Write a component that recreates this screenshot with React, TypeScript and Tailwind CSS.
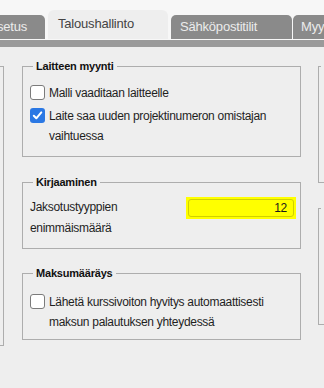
import React from "react"

function Box({ checked }: { checked?: boolean }) {
  if (checked) {
    return (
      <span className="mt-[2px] flex h-[15px] w-[15px] shrink-0 items-center justify-center rounded-[3px] bg-[#2b78e4]">
        <svg width="11" height="11" viewBox="0 0 11 11">
          <path d="M1.8 5.8 L4.3 8.3 L9.3 2.4" fill="none" stroke="#ffffff" strokeWidth="2" strokeLinecap="round" strokeLinejoin="round" />
        </svg>
      </span>
    )
  }
  return <span className="mt-[2px] h-[15px] w-[15px] shrink-0 rounded-[3px] border border-[#7b7b7b] bg-white" />
}

function Legend({ children }: { children: React.ReactNode }) {
  return (
    <legend className="ml-[3px] px-[3px] text-[11px] leading-[14px] font-bold tracking-[-0.2px] text-[#111]">
      {children}
    </legend>
  )
}

export default function App() {
  return (
    <div className="w-[324px] h-[388px] overflow-hidden bg-[#eeeeee] font-['Liberation_Sans',Arial,sans-serif] text-[#1f1f1f]">
      {/* Tabs */}
      <div className="bg-[#f7f7f7] pt-[10px] pb-px">
        <div className="flex items-end whitespace-nowrap text-[13px] tracking-[-0.2px]">
          <div className="-ml-[75px] flex h-[24px] w-[120px] shrink-0 items-center justify-end rounded-t-[5px] bg-[#8a8a8a] pr-[18px] text-[#ececec]">
            Perusasetus
          </div>
          <div className="ml-[3px] h-[29px] w-[120px] shrink-0 rounded-t-[6px] bg-[#eeeeee] pl-[10px] pt-[4px] text-[#444]">
            Taloushallinto
          </div>
          <div className="ml-[3px] flex h-[24px] w-[121px] shrink-0 items-center rounded-t-[5px] bg-[#8a8a8a] pl-[9px] text-[#ececec]">
            Sähköpostitilit
          </div>
          <div className="ml-[1px] flex h-[24px] w-[31px] shrink-0 items-center overflow-hidden rounded-tl-[5px] bg-[#8a8a8a] pl-[8px] text-[#ececec]">
            Myy
          </div>
        </div>
      </div>
      <div className="h-[7px] bg-[#9a9a9a]" />

      {/* Content */}
      <div className="flex items-start">
        <div className="-ml-[96px] mt-[19px] h-[280px] w-[100px] shrink-0 border border-[#adadad]" />

        <div className="ml-[18px] w-[279px] shrink-0 pt-[12px] text-[12px] tracking-[-0.3px]">
          <fieldset className="border border-[#adadad] pl-[7px] pr-[4px] pb-[10px]">
            <Legend>Laitteen myynti</Legend>
            <div className="mt-[10px] flex items-start gap-[4px] leading-[20px]">
              <Box />
              <span>Malli vaaditaan laitteelle</span>
            </div>
            <div className="mt-[3px] flex items-start gap-[4px] leading-[20px]">
              <Box checked />
              <span className="w-[230px]">Laite saa uuden projektinumeron omistajan vaihtuessa</span>
            </div>
          </fieldset>

          <fieldset className="mt-[18px] border border-[#adadad] pl-[7px] pr-[4px] pb-[9px]">
            <Legend>Kirjaaminen</Legend>
            <div className="mt-[8px] flex items-start justify-between">
              <span className="w-[140px] leading-[21px]">Jaksotustyyppien enimmäismäärä</span>
              <div className="h-[22px] w-[110px] bg-[#ffff00] p-[2px]">
                <div className="flex h-full items-center justify-end rounded-[3px] border border-[#d0d000] pr-[6px] text-[#1a1a1a]">
                  12
                </div>
              </div>
            </div>
          </fieldset>

          <fieldset className="mt-[17px] border border-[#adadad] pl-[7px] pr-[4px] pb-[7px]">
            <Legend>Maksumääräys</Legend>
            <div className="mt-[12px] flex items-start gap-[4px] leading-[20px]">
              <Box />
              <span className="w-[230px]">Lähetä kurssivoiton hyvitys automaattisesti maksun palautuksen yhteydessä</span>
            </div>
          </fieldset>
        </div>

        <div className="ml-[17px] w-[200px] shrink-0 pt-[12px]">
          <fieldset className="h-[124px] border border-[#adadad] pl-[2px]">
            <legend className="h-[14px] w-[60px]" />
          </fieldset>
          <fieldset className="mt-[18px] h-[124px] border border-[#adadad] pl-[2px]">
            <legend className="h-[14px] w-[60px]" />
          </fieldset>
        </div>
      </div>
    </div>
  )
}
